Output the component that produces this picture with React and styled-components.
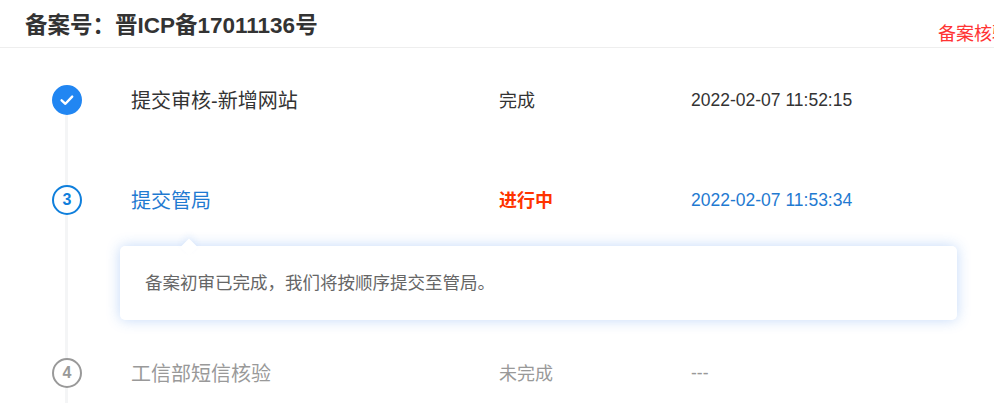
import React from "react";
import styled, { createGlobalStyle } from "styled-components";

const Global = createGlobalStyle`
  html, body { margin: 0; padding: 0; background: #fff; }
  body { font-family: "Liberation Sans", "Noto Sans CJK SC", sans-serif; overflow: hidden; }
  #root { height: 404px; overflow: hidden; }
`;

const Header = styled.header`
  display: flex;
  align-items: flex-start;
  height: 47px;
  padding-left: 25px;
  border-bottom: 1px solid #eeeeee;
  overflow: hidden;
`;
const Title = styled.h1`
  margin: 0;
  width: 913px;
  flex: none;
  font-size: 22.5px;
  line-height: 52px;
  font-weight: 700;
  color: #333;
  white-space: nowrap;
`;
const Note = styled.span`
  flex: none;
  font-size: 18px;
  line-height: 24px;
  margin-top: 22px;
  color: #ff3333;
  white-space: nowrap;
`;

const Steps = styled.ol`
  position: relative;
  list-style: none;
  margin: 0;
  padding: 22px 0 0;
  &::before {
    content: "";
    position: absolute;
    left: 65px;
    top: 60px;
    bottom: 0;
    width: 3px;
    background: #f4f5f6;
  }
`;
const Step = styled.li`
  position: relative;
  margin-bottom: ${(p) => p.$gap}px;
`;
const Row = styled.div`
  display: grid;
  grid-template-columns: 80px 367px 192px 1fr;
  align-items: center;
  height: 60px;
  padding-left: 52px;
`;
const Badge = styled.span`
  box-sizing: border-box;
  width: 30px;
  height: 30px;
  border-radius: 50%;
  display: flex;
  align-items: center;
  justify-content: center;
  font-size: 16px;
  font-weight: 700;
  background: ${(p) => p.$fill};
  border: 2px solid ${(p) => p.$ring};
  color: ${(p) => p.$ring};
`;
const Name = styled.span`
  font-size: 20px;
  margin-left: -1px;
  padding-bottom: 2px;
  color: ${(p) => p.$color};
`;
const Status = styled.span`
  font-size: 18px;
  padding-bottom: 2px;
  font-weight: ${(p) => (p.$strong ? 700 : 400)};
  color: ${(p) => p.$color};
`;
const Time = styled.span`
  font-size: 17.5px;
  color: ${(p) => p.$color};
`;
const Detail = styled.div`
  position: relative;
  box-sizing: border-box;
  margin: 16px 0 0 120px;
  width: 837px;
  height: 74px;
  padding: 0 25px 3px;
  display: flex;
  align-items: center;
  background: #fff;
  border-radius: 5px;
  box-shadow: 0 0 14px rgba(40, 120, 235, 0.28);
  font-size: 17.5px;
  color: #666;
  &::before {
    content: "";
    position: absolute;
    left: 63px;
    top: -5px;
    width: 12px;
    height: 12px;
    background: #fff;
    transform: rotate(45deg);
    box-shadow: -3px -3px 6px rgba(40, 120, 235, 0.08);
  }
`;

const Check = () => (
  <svg width="16" height="16" viewBox="0 0 16 16" fill="none" stroke="#fff" strokeWidth="2.4" strokeLinecap="round" strokeLinejoin="round">
    <path d="M2.6 8.3 L6.4 11.8 L13.2 4.6" />
  </svg>
);

export default function App() {
  return (
    <>
      <Global />
      <Header>
        <Title>备案号：晋ICP备17011136号</Title>
        <Note>备案核验信息</Note>
      </Header>
      <Steps>
        <Step $gap={40}>
          <Row>
            <Badge $fill="#2186f2" $ring="#2186f2"><Check /></Badge>
            <Name $color="#333">提交审核-新增网站</Name>
            <Status $color="#333">完成</Status>
            <Time $color="#333">2022-02-07 11:52:15</Time>
          </Row>
        </Step>
        <Step $gap={23}>
          <Row>
            <Badge $fill="#fff" $ring="#0f7fdc">3</Badge>
            <Name $color="#1f7ad1">提交管局</Name>
            <Status $color="#ff3300" $strong>进行中</Status>
            <Time $color="#1f7ad1">2022-02-07 11:53:34</Time>
          </Row>
          <Detail>备案初审已完成，我们将按顺序提交至管局。</Detail>
        </Step>
        <Step $gap={0}>
          <Row>
            <Badge $fill="#fff" $ring="#999">4</Badge>
            <Name $color="#999">工信部短信核验</Name>
            <Status $color="#999">未完成</Status>
            <Time $color="#999">---</Time>
          </Row>
        </Step>
      </Steps>
    </>
  );
}
